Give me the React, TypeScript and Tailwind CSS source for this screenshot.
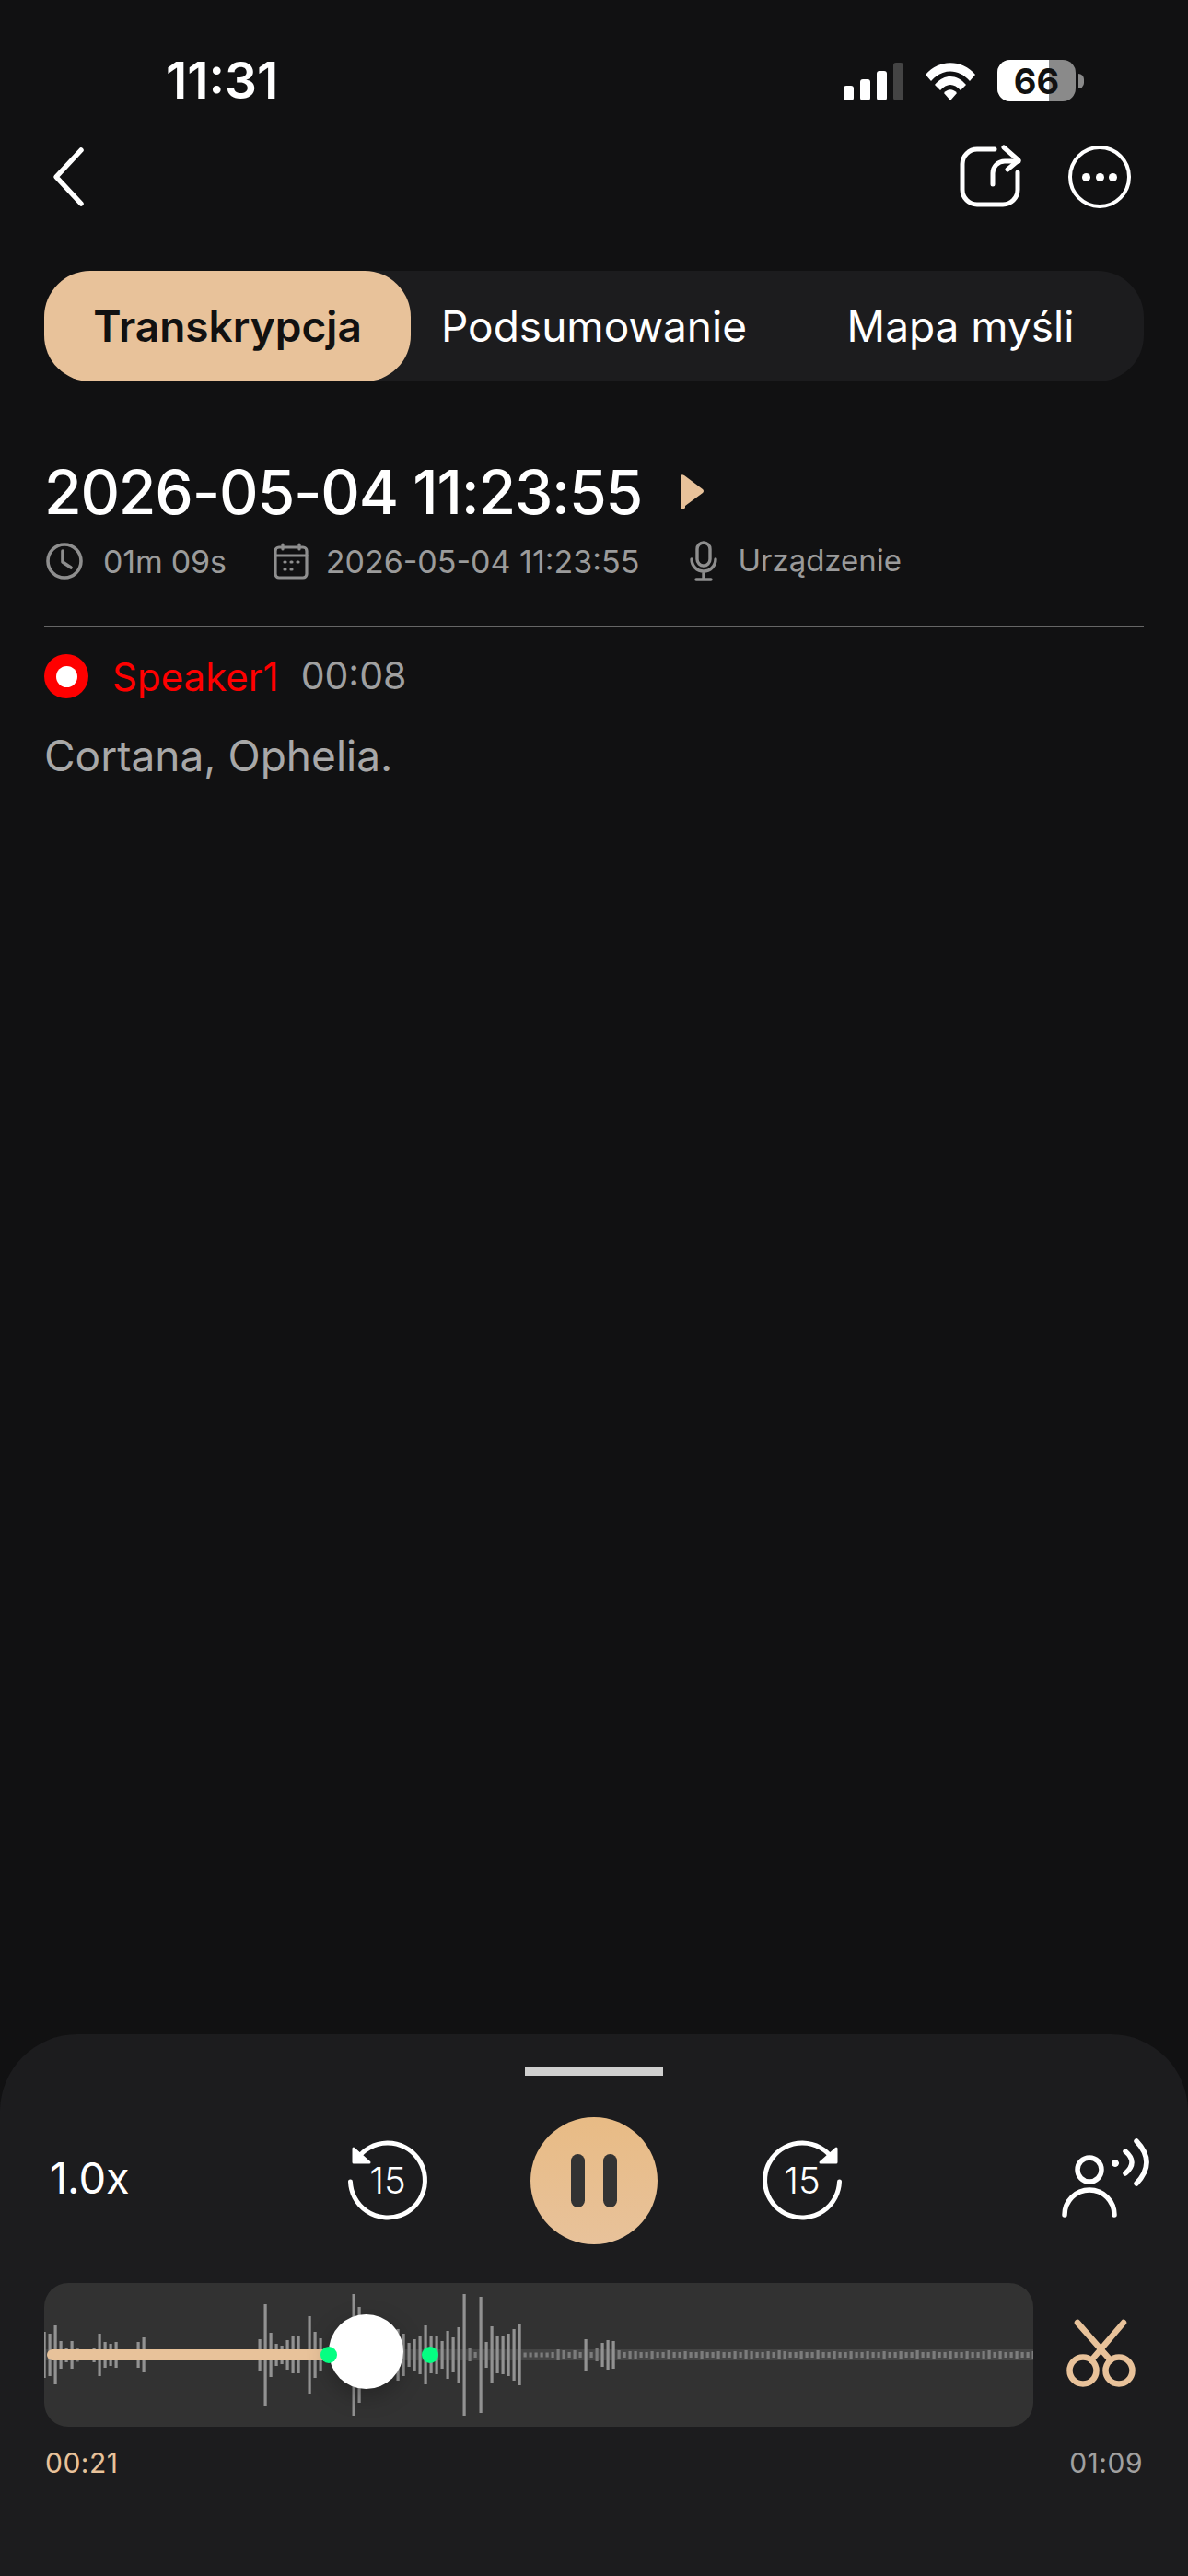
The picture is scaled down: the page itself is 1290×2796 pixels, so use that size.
import React from "react";

const font = { fontFamily: "Inter, 'Noto Sans', sans-serif" };

// half heights of the wave bars, one every 6px from the left of the box
const head = [
  25, 23, 32, 15, 8, 15, 7.5, 0, 0, 8, 23, 14, 12, 14, 6, 0, 0, 14, 19, 0, 0, 0, 0, 0, 0, 0, 0, 0, 0, 0, 0, 6, 0, 0, 6, 0, 0, 0, 6, 17, 55, 24, 12, 10,
  16, 20, 20, 0, 42, 25, 18, 0, 0, 0, 0, 0, 66, 52, 0, 0, 0, 0, 0, 0, 28, 23, 13, 17, 21, 32, 20, 21, 15, 26, 19, 30, 66, 7, 3, 63, 14, 31, 20, 21, 23,
  28, 33, 2.5, 2.5, 2.5, 2.5, 2.5, 3, 6, 5, 3, 5, 3, 17, 3, 7, 13, 16, 15, 5, 3, 4,
];
const tallTail = [113, 127, 133, 140, 158, 171];
const tail = Array.from({ length: 73 }, (_, i) => (tallTail.includes(i + 107) ? 5 : i % 3 === 0 ? 4 : 3));
const bars = [...head, ...tail];

function SkipIcon({ flip }: { flip?: boolean }) {
  return (
    <div className="relative w-[100px] h-[100px]">
      <svg viewBox="0 0 100 100" className={flip ? "w-full h-full -scale-x-100" : "w-full h-full"} fill="none">
        <path d="M9.5 51 A40.5 40.5 0 1 0 17 26" stroke="white" strokeWidth="5" strokeLinecap="round" />
        <path d="M13 15 V30 H30 Z" fill="white" stroke="white" strokeWidth="3" strokeLinejoin="round" />
      </svg>
      <span className="absolute inset-0 flex items-center justify-center text-[40px] font-light text-white">15</span>
    </div>
  );
}

function Waveform() {
  return (
    <div className="relative w-[1074px] h-[156px] rounded-[26px] bg-[#323232] overflow-hidden">
      <div className="absolute left-0 right-0 top-[72px] h-3 bg-[#454545]" />
      <svg viewBox="0 0 1074 156" className="absolute inset-0 w-full h-full">
        {bars.map((h, i) =>
          h > 0 ? <rect key={i} x={i * 6 - 1.5} y={78 - h} width="3.2" height={h * 2} fill={h < 8 ? "#7c7c7c" : "#929292"} /> : null,
        )}
      </svg>
      <div className="absolute left-[3px] top-[72px] w-[310px] h-3 rounded-full bg-[#e8c29a]" />
      <div className="absolute left-[309px] top-[34px] w-[81px] h-[81px] rounded-full bg-white shadow-[0_8px_24px_rgba(0,0,0,0.25)]" />
      <div className="absolute left-[300px] top-[69px] w-[18px] h-[18px] rounded-full bg-[#05ff82]" />
      <div className="absolute left-[410px] top-[69px] w-[18px] h-[18px] rounded-full bg-[#05ff82]" />
    </div>
  );
}

export default function App() {
  return (
    <div className="w-[1290px] h-[2796px] bg-[#111112] flex flex-col overflow-hidden" style={font}>
      <div className="flex-1">
        {/* status bar */}
        <div className="flex items-center h-[45px] mt-[65px] pl-[180px] pr-[113px] justify-between">
          <span className="text-[55px] leading-none font-semibold text-white">11:31</span>
          <div className="flex items-center">
            <div className="flex items-end gap-[7px] h-[42px]">
              <div className="w-[11px] h-[16px] rounded-[3px] bg-white" />
              <div className="w-[11px] h-[23px] rounded-[3px] bg-white" />
              <div className="w-[11px] h-[32px] rounded-[3px] bg-white" />
              <div className="w-[11px] h-[41px] rounded-[3px] bg-[#444]" />
            </div>
            <svg viewBox="0 0 58 42" className="w-[58px] h-[42px] ml-[22px]">
              <path d="M2 14 C16 -3 42 -3 56 14 L50 21 C38 7 20 7 8 21 Z" fill="white" />
              <path d="M12 25 C22 13 36 13 46 25 L40 31 C33 23 25 23 18 31 Z" fill="white" />
              <path d="M22 34 C26 29 32 29 36 34 L29 42 Z" fill="white" />
            </svg>
            <div className="relative ml-[22px] w-[85px] h-[45px] rounded-[14px] bg-[#8a8a8a] overflow-hidden">
              <div className="absolute left-0 top-0 bottom-0 w-[56px] bg-white" />
              <span className="absolute inset-0 flex items-center justify-center text-[38px] leading-none font-bold text-[#111]">66</span>
            </div>
            <div className="w-[6px] h-[16px] ml-[3px] rounded-r-full bg-[#8a8a8a]" />
          </div>
        </div>

        {/* nav */}
        <div className="flex items-center justify-between h-[70px] mt-[47px] pl-[56px] pr-[62px]">
          <svg viewBox="0 0 36 66" className="w-[36px] h-[66px]" fill="none">
            <path d="M32 4 L5 33 L32 62" stroke="white" strokeWidth="5.5" strokeLinecap="round" strokeLinejoin="round" />
          </svg>
          <div className="flex items-center gap-[50px]">
            <svg viewBox="0 0 70 70" className="w-[70px] h-[70px]" fill="none" stroke="white" strokeWidth="5" strokeLinecap="round" strokeLinejoin="round">
              <path d="M40 5 H21 A16 16 0 0 0 5 21 V49 A16 16 0 0 0 21 65 H49 A16 16 0 0 0 65 49 V30" />
              <path d="M38 43 V31 A13 13 0 0 1 51 18 H66" />
              <path d="M50 3 L66 17 L54 27" />
            </svg>
            <div className="w-[68px] h-[68px] rounded-full border-[4px] border-white flex items-center justify-center gap-[5.5px]">
              <div className="w-[9px] h-[9px] rounded-full bg-white" />
              <div className="w-[9px] h-[9px] rounded-full bg-white" />
              <div className="w-[9px] h-[9px] rounded-full bg-white" />
            </div>
          </div>
        </div>

        {/* tabs */}
        <div className="mx-[48px] mt-[67px] h-[120px] rounded-[50px] bg-[#1c1c1e] grid grid-cols-3 text-[46px] text-white">
          <div className="flex items-center justify-center rounded-[50px] bg-[#e8c29a] text-[#111] font-semibold">Transkrypcja</div>
          <div className="flex items-center justify-center">Podsumowanie</div>
          <div className="flex items-center justify-center">Mapa myśli</div>
        </div>

        {/* title */}
        <div className="flex items-center mt-[88px] ml-[48px] h-[64px]">
          <span className="text-[66px] leading-none font-medium text-white tracking-[-1.2px]">2026-05-04 11:23:55</span>
          <svg viewBox="0 0 26 38" className="w-[26px] h-[38px] ml-[42px]">
            <path d="M0 3 Q0 -1 4 1 L24 16 Q26 18 24 20 L5 34 V36 Q3 39 0 36 Z" fill="#e8c29a" />
          </svg>
        </div>

        {/* meta */}
        <div className="flex items-center mt-[21px] ml-[50px] h-[44px] text-[34px] text-[#9b9b9b]">
          <svg viewBox="0 0 40 40" className="w-[40px] h-[40px]" fill="none" stroke="#8e8e8e" strokeWidth="3.6" strokeLinecap="round" strokeLinejoin="round">
            <circle cx="20" cy="20" r="18" />
            <path d="M18 9 V21 L27 27" />
          </svg>
          <span className="ml-[22px] tracking-[-0.2px]">01m 09s</span>
          <svg viewBox="0 0 38 40" className="ml-[51px] w-[38px] h-[40px]" fill="none" stroke="#8e8e8e" strokeWidth="3.2" strokeLinecap="round">
            <rect x="2" y="5" width="34" height="33" rx="4" />
            <path d="M2 14 H36 M10 2 V7 M28 2 V7" />
            <path d="M12 21 H13 M19 21 H20 M26 21 H27 M12 29 H13 M19 29 H20" />
          </svg>
          <span className="ml-[19px]">2026-05-04 11:23:55</span>
          <svg viewBox="0 0 30 44" className="ml-[55px] w-[30px] h-[44px]" fill="none" stroke="#8e8e8e" strokeWidth="3.4" strokeLinecap="round">
            <rect x="8" y="2" width="14" height="25" rx="7" />
            <path d="M2 20 A13 13 0 0 0 28 20 M15 34 V41 M7 42 H23" />
          </svg>
          <span className="ml-[22px] text-[33px]">Urządzenie</span>
        </div>

        <div className="mx-[48px] mt-[49px] h-[1px] bg-[#666]" />

        {/* transcript */}
        <div className="flex items-center mt-[29px] ml-[48px] h-[48px]">
          <div className="w-[48px] h-[48px] rounded-full bg-[#ff0000] flex items-center justify-center">
            <div className="w-[23px] h-[23px] rounded-full bg-white" />
          </div>
          <span className="ml-[26px] text-[42px] text-[#ff0000]">Speaker1</span>
          <span className="ml-[24px] text-[41px] text-[#a0a0a0]">00:08</span>
        </div>
        <p className="mt-[30px] ml-[48px] text-[46px] leading-[64px] text-[#a8a8a8]">Cortana, Ophelia.</p>
      </div>

      {/* player */}
      <div className="h-[588px] rounded-t-[84px] bg-[#1c1c1e] flex flex-col text-white">
        <div className="mt-[36px] mx-auto w-[150px] h-[9px] bg-[#cfcfcf]" />
        <div className="flex items-center mt-[45px] pl-[54px]">
          <span className="w-[317px] text-[47px] -mt-[6px]">1.0x</span>
          <SkipIcon />
          <div className="ml-[105px] w-[138px] h-[138px] rounded-full bg-linear-to-b from-[#e8bb85] to-[#e8c29a] flex items-center justify-center gap-[20px]">
            <div className="w-[15px] h-[58px] rounded-full bg-[#333]" />
            <div className="w-[15px] h-[58px] rounded-full bg-[#333]" />
          </div>
          <div className="ml-[107px]">
            <SkipIcon flip />
          </div>
          <svg viewBox="0 0 100 100" className="ml-[229px] w-[100px] h-[100px]" fill="none" stroke="white" strokeWidth="5.5" strokeLinecap="round">
            <circle cx="33" cy="38" r="13" />
            <path d="M6 87 A27 27 0 0 1 60 87" />
            <circle cx="61" cy="31" r="3.5" fill="white" strokeWidth="1" />
            <path d="M72 18 Q86 30 72 42" />
            <path d="M84 7 Q106 30 84 53" />
          </svg>
        </div>
        <div className="flex items-center mt-[42px] ml-[48px]">
          <Waveform />
          <svg viewBox="0 0 90 85" className="ml-[28px] w-[90px] h-[85px]" fill="none" stroke="#e8c29a" strokeWidth="6.5" strokeLinecap="round">
            <circle cx="26" cy="59" r="14.5" />
            <circle cx="65" cy="59" r="14.5" />
            <path d="M20 7 L56 48" />
            <path d="M70 7 L35 48" />
          </svg>
        </div>
        <div className="flex justify-between mt-[17px] mx-[49px] text-[30px] tracking-[0.5px]">
          <span className="text-[#e8c29a]">00:21</span>
          <span className="text-[#a0a0a0]">01:09</span>
        </div>
      </div>
    </div>
  );
}
